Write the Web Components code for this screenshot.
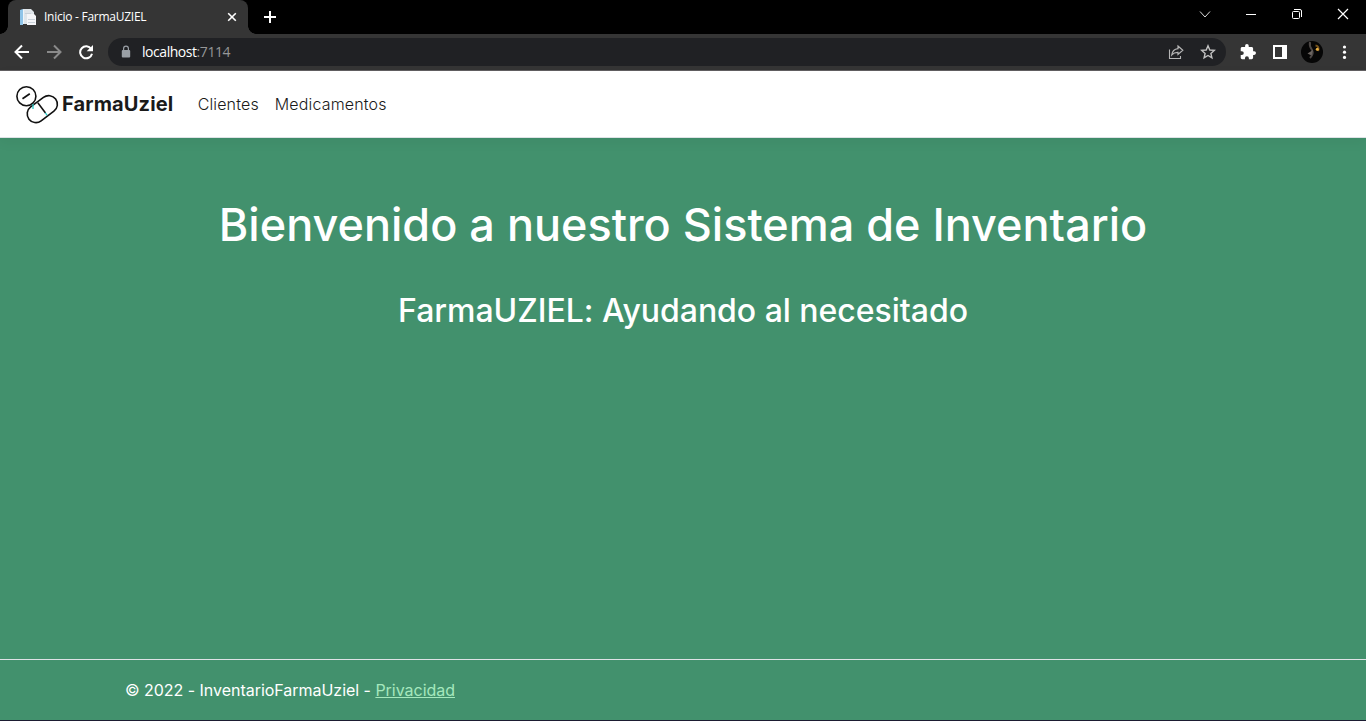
<!DOCTYPE html>
<html lang="es">
<head>
<meta charset="utf-8">
<title>Inicio - FarmaUZIEL</title>
<style>
html,body{margin:0;height:100%;overflow:hidden}
body{font-family:Inter,sans-serif;background:#42916d}
</style>
</head>
<body>
<app-window></app-window>
<script>
const define = (name, markup) => customElements.define(name, class extends HTMLElement {
  constructor() {
    super();
    const t = document.createElement('template');
    t.innerHTML = markup;
    this.attachShadow({mode: 'open'}).append(t.content.cloneNode(true));
  }
});

define('tab-strip', `<style>
:host{display:flex;height:34px;background:#000;padding-left:8px;box-sizing:border-box}
.tab{position:relative;box-sizing:border-box;width:240px;height:34px;background:#353535;border-radius:8px 8px 0 0;display:flex;align-items:center;padding:0 10px 0 12px;color:#fff;font:12px "Open Sans",sans-serif}
.tab:before,.tab:after{content:"";position:absolute;bottom:0;width:8px;height:8px}
.tab:before{left:-8px;background:radial-gradient(circle at 0 0,transparent 7.5px,#353535 8px)}
.tab:after{right:-8px;background:radial-gradient(circle at 100% 0,transparent 7.5px,#353535 8px)}
.title{flex:1;margin-left:8px;padding-bottom:2px;white-space:nowrap;letter-spacing:-.26px}
svg{display:block;flex:none}
.plus{margin:10px 0 0 15px}
.controls{margin-left:auto;display:flex}
</style>
<div class="tab">
<svg width="16" height="16" viewBox="0 0 16 16"><path d="M0 1L3 0V16H0Z" fill="#8fc4e8"/><path d="M3 0H11L14 3V15H3Z" fill="#dfe5ea"/><path d="M7 5H14L16 7V16H7Z" fill="#f4f5f8"/><path d="M8 10.5H15M8 13.5H15M5 4.5H11" stroke="#c9d1d9"/><path d="M3.5 1V15" stroke="#eef5fa"/></svg>
<span class="title">Inicio - FarmaUZIEL</span>
<svg width="12" height="12" viewBox="0 0 12 12"><path d="M2.2 2.2L9.8 9.8M9.8 2.2L2.2 9.8" stroke="#fff" stroke-width="1.6"/></svg>
</div>
<svg class="plus" width="14" height="14" viewBox="0 0 14 14"><path d="M7 1V13M1 7H13" stroke="#fff" stroke-width="2"/></svg>
<div class="controls">
<svg width="46" height="28"><path d="M18 11.5L23 17L28 11.5" fill="none" stroke="#ddd"/></svg>
<svg width="46" height="28"><path d="M18 14.5H28" stroke="#fff"/></svg>
<svg width="46" height="28"><rect x="18.5" y="11.5" width="7" height="7" rx="1" fill="none" stroke="#fff"/><path d="M20 9.5H26Q27.5 9.5 27.5 11V17" fill="none" stroke="#fff"/></svg>
<svg width="46" height="28"><path d="M18 9L28 19M28 9L18 19" stroke="#fff" stroke-width="1.2"/></svg>
</div>`);

define('tool-bar', `<style>
:host{display:flex;align-items:center;box-sizing:border-box;height:37px;background:#353535;border-bottom:1px solid #625f62;padding:0 14px}
svg{display:block;flex:none}
.nav{display:flex;gap:16px}
.address{flex:1;box-sizing:border-box;display:flex;align-items:center;height:28px;background:#202124;border-radius:14px;margin:0 14px;padding:0 10px 0 12px}
.url{flex:1;margin-left:10px;padding-bottom:2px;font:14px "Open Sans",sans-serif;letter-spacing:-.45px;color:#969798}
b{font-weight:400;color:#fff}
.actions{display:flex;align-items:center;gap:16px}
.avatar{margin:0 -3px}
</style>
<div class="nav">
<svg width="16" height="16" viewBox="0 0 16 16"><path d="M15 8H2M8 1.5L1.5 8L8 14.5" fill="none" stroke="#fff" stroke-width="2"/></svg>
<svg width="16" height="16" viewBox="0 0 16 16"><path d="M1 8H14M8 1.5L14.5 8L8 14.5" fill="none" stroke="#8a8a8a" stroke-width="2"/></svg>
<svg width="16" height="16" viewBox="0 0 16 16"><path d="M13.2 5A6 6 0 1 0 14 9.7" fill="none" stroke="#fff" stroke-width="2"/><path d="M15 1V7.3H8.7Z" fill="#fff"/></svg>
</div>
<div class="address">
<svg width="12" height="14" viewBox="0 0 12 14"><rect x="1.8" y="5" width="8.4" height="7.4" rx="1" fill="#9aa0a6"/><path d="M3.6 5V3.6A2.4 2.4 0 0 1 8.4 3.6V5" fill="none" stroke="#9aa0a6" stroke-width="1.2"/></svg>
<span class="url"><b>localhost</b>:7114</span>
<div class="actions">
<svg width="16" height="16" viewBox="0 0 16 16"><path d="M1.5 5.5V14.5H12.5V12" fill="none" stroke="#b5b5b5" stroke-width="1.1"/><path d="M10 2L14.8 6.3L10 10.5V8.3Q6 8.2 3.8 10.8Q4.5 5.3 10 4.6Z" fill="none" stroke="#b5b5b5" stroke-width="1.2"/></svg>
<svg width="16" height="16" viewBox="0 0 16 16"><path d="M8 1.8L9.8 6L14.3 6.4L10.9 9.4L11.9 13.9L8 11.5L4.1 13.9L5.1 9.4L1.7 6.4L6.2 6Z" fill="none" stroke="#c2c2c2" stroke-width="1.4"/></svg>
</div></div>
<div class="actions">
<svg width="16" height="16" viewBox="1 1 22 22"><path d="M20.5 11H19V7c0-1.1-.9-2-2-2h-4V3.5a2.5 2.5 0 0 0-5 0V5H4c-1.1 0-2 .9-2 2v3.8h1.5a2.7 2.7 0 0 1 0 5.4H2V20c0 1.1.9 2 2 2h3.8v-1.5a2.7 2.7 0 0 1 5.4 0V22H17c1.1 0 2-.9 2-2v-4h1.5a2.5 2.5 0 0 0 0-5z" fill="#fff"/></svg>
<svg width="16" height="16" viewBox="0 0 16 16"><path fill="#fff" fill-rule="evenodd" d="M1 1H15V15H1ZM3 3V13H10V3Z"/></svg>
<svg class="avatar" width="22" height="22" viewBox="0 0 22 22"><circle cx="11" cy="11" r="11" fill="#060606"/><path d="M9 1Q8 5 11 9Q13 13 9 17" fill="none" stroke="#4c4745" stroke-width="2"/><path d="M6.5 12.5L12 9L10.5 14.5Z" fill="#6c6561"/><path d="M14.5 4.5Q18.5 5 17 10" fill="none" stroke="#75531c" stroke-width="2.2"/><circle cx="16.3" cy="8.3" r="1.5" fill="#e7ae42"/></svg>
<svg width="16" height="16" viewBox="0 0 16 16" fill="#fff"><circle cx="8.5" cy="3" r="1.6"/><circle cx="8.5" cy="8.2" r="1.6"/><circle cx="8.5" cy="13.4" r="1.6"/></svg>
</div>`);

define('brand-mark', `<style>:host{display:flex;align-items:center;color:#1a1a1a;font-size:20px;font-weight:700;letter-spacing:.13px}svg{display:block;margin-right:3px}</style>
<svg width="44" height="40" viewBox="0 0 44 40" fill="none" stroke="#111" stroke-width="1.6"><circle cx="11.4" cy="12.2" r="9.5"/><path d="M7.5 14.8L14.8 9.8" stroke-width="1.7"/><rect x="10.6" y="16.4" width="33.4" height="17.4" rx="8.7" transform="rotate(-37 27.3 25.1)"/><path d="M22.8 18.8L30.5 29"/><path d="M18 20V25M30.3 28.8L32.2 31.3" stroke="#27c9c7" stroke-width="1.3"/></svg><slot></slot>`);

define('nav-link', `<style>:host{display:block;padding:8px;font-size:16px;font-weight:300;line-height:24px;letter-spacing:.15px;color:#1a1a1a}</style><slot></slot>`);

define('site-nav', `<style>
:host{display:flex;align-items:center;position:relative;z-index:1;box-sizing:border-box;height:67px;background:#fff;border-bottom:1px solid #dee2e6;padding:0 15px;box-shadow:0 4px 12px rgba(0,0,0,.05)}
brand-mark{margin-right:16.3px}
</style><brand-mark>FarmaUziel</brand-mark><nav-link>Clientes</nav-link><nav-link>Medicamentos</nav-link>`);

define('welcome-panel', `<style>
:host{display:flex;flex-direction:column;align-items:center;flex:1;color:#fff;padding-top:58px}
h1,h2{margin:0;font-weight:500;white-space:nowrap}
h1{font-size:45px;line-height:58px}
h2{font-size:32px;line-height:40px;margin-top:37px;letter-spacing:-.03px}
</style><h1>Bienvenido a nuestro Sistema de Inventario</h1><h2>FarmaUZIEL: Ayudando al necesitado</h2>`);

define('site-footer', `<style>
:host{display:block;box-sizing:border-box;height:62px;border-top:1px solid #dee2e6;border-bottom:1px solid #1b1b31;padding:0 125px;color:#fff;font-size:16px;line-height:60px;letter-spacing:-.03px;white-space:nowrap}
a{color:#a5e8bd;text-decoration:underline}
</style>© 2022 - InventarioFarmaUziel - <a>Privacidad</a>`);

define('app-window', `<style>:host{display:flex;flex-direction:column;height:721px;background:#42916d}</style>
<tab-strip></tab-strip><tool-bar></tool-bar><site-nav></site-nav><welcome-panel></welcome-panel><site-footer></site-footer>`);
</script>
</body>
</html>
